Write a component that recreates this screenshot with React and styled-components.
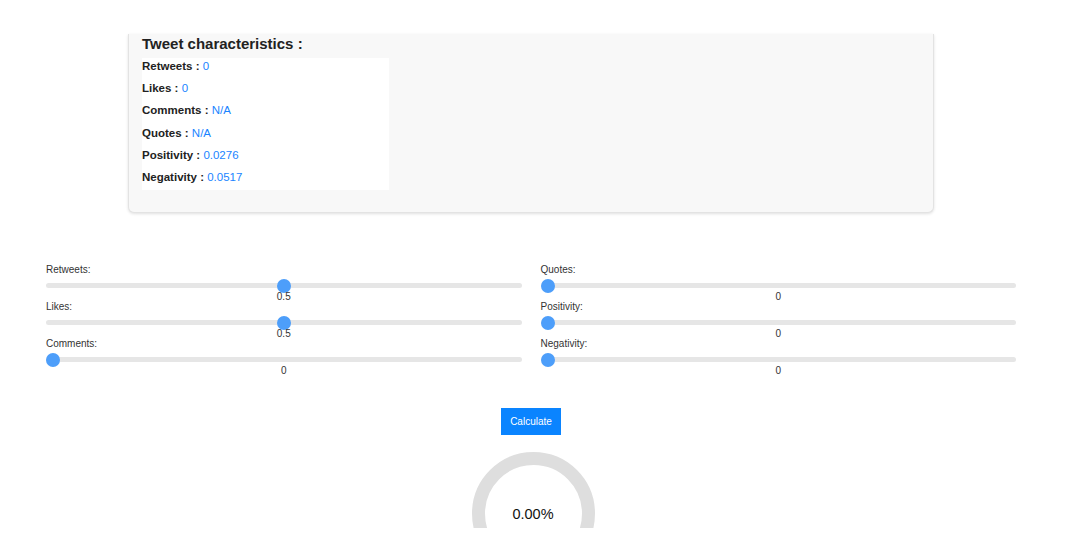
import React, { useState } from "react";
import styled, { createGlobalStyle } from "styled-components";

const Global = createGlobalStyle`
  html, body { margin: 0; padding: 0; background: #fff; }
  body { font-family: "Liberation Sans", Arial, Helvetica, sans-serif; color: #222; }
`;

const Viewport = styled.div`
  width: 1062px;
  height: 528px;
  overflow: hidden;
  padding-top: 34px;
  box-sizing: border-box;
`;

const Card = styled.section`
  width: 806px;
  margin: 0 0 0 128px;
  box-sizing: border-box;
  background: #f8f8f8;
  border: 1px solid #e3e3e3;
  border-top: none;
  border-radius: 0 0 6px 6px;
  box-shadow: 0 1px 3px rgba(0, 0, 0, 0.12);
  padding: 0 14px 22px 13px;
`;

const CardTitle = styled.h3`
  margin: 0 0 4px;
  font-size: 15px;
  line-height: 20px;
  font-weight: 700;
  color: #222;
`;

const StatsBox = styled.div`
  display: flow-root;
  width: 247px;
  height: 132px;
  background: #fff;
`;

const StatRow = styled.div`
  font-size: 11.5px;
  line-height: 16px;
  margin-bottom: 6.2px;
  font-weight: 700;
  color: #222;
`;

const StatValue = styled.span`
  font-weight: 400;
  color: #1a84ff;
`;

const SliderGrid = styled.div`
  display: grid;
  grid-template-columns: 1fr 1fr;
  column-gap: 19px;
  width: 970px;
  margin: 52px 0 0 46px;
`;

const Column = styled.div`
  display: flex;
  flex-direction: column;
`;

const SliderBlock = styled.div`
  display: flex;
  flex-direction: column;
`;

const SliderLabel = styled.label`
  font-size: 10px;
  line-height: 10px;
  color: #333;
`;

const Range = styled.input`
  -webkit-appearance: none;
  appearance: none;
  width: 100%;
  height: 5px;
  margin: 8px 0 4px;
  padding: 0;
  border-radius: 3px;
  background: #e6e6e6;
  outline: none;
  &::-webkit-slider-thumb {
    -webkit-appearance: none;
    appearance: none;
    width: 14px;
    height: 14px;
    border-radius: 50%;
    background: #4d9efa;
    border: none;
    cursor: pointer;
  }
`;

const SliderValue = styled.div`
  text-align: center;
  font-size: 10px;
  line-height: 10px;
  color: #333;
`;

const Actions = styled.div`
  display: flex;
  flex-direction: column;
  align-items: center;
  margin-top: 32px;
`;

const CalcButton = styled.button`
  height: 27px;
  padding: 0 9px;
  border: none;
  border-radius: 0;
  background: #0a84ff;
  color: #fff;
  font-family: inherit;
  font-size: 10px;
  cursor: pointer;
`;

const Ring = styled.div`
  margin-top: 17px;
  width: 123px;
  height: 123px;
  box-sizing: border-box;
  border: 13px solid #dedede;
  border-radius: 50%;
  display: flex;
  align-items: center;
  justify-content: center;
  font-size: 14.5px;
  color: #111;
  margin-left: 4px;
`;

function Slider({ label, value, onChange }) {
  return (
    <SliderBlock>
      <SliderLabel>{label}:</SliderLabel>
      <Range
        type="range"
        min="0"
        max="1"
        step="0.1"
        value={value}
        onChange={(e) => onChange(parseFloat(e.target.value))}
      />
      <SliderValue>{value}</SliderValue>
    </SliderBlock>
  );
}

const stats = [
  ["Retweets", "0"],
  ["Likes", "0"],
  ["Comments", "N/A"],
  ["Quotes", "N/A"],
  ["Positivity", "0.0276"],
  ["Negativity", "0.0517"],
];

export default function App() {
  const [w, setW] = useState({
    Retweets: 0.5,
    Likes: 0.5,
    Comments: 0,
    Quotes: 0,
    Positivity: 0,
    Negativity: 0,
  });
  const set = (k) => (v) => setW((p) => ({ ...p, [k]: v }));
  const left = ["Retweets", "Likes", "Comments"];
  const right = ["Quotes", "Positivity", "Negativity"];
  return (
    <>
      <Global />
      <Viewport>
        <Card>
          <CardTitle>Tweet characteristics :</CardTitle>
          <StatsBox>
            {stats.map(([k, v]) => (
              <StatRow key={k}>
                {k} : <StatValue>{v}</StatValue>
              </StatRow>
            ))}
          </StatsBox>
        </Card>
        <SliderGrid>
          <Column>
            {left.map((k) => (
              <Slider key={k} label={k} value={w[k]} onChange={set(k)} />
            ))}
          </Column>
          <Column>
            {right.map((k) => (
              <Slider key={k} label={k} value={w[k]} onChange={set(k)} />
            ))}
          </Column>
        </SliderGrid>
        <Actions>
          <CalcButton>Calculate</CalcButton>
          <Ring>0.00%</Ring>
        </Actions>
      </Viewport>
    </>
  );
}
